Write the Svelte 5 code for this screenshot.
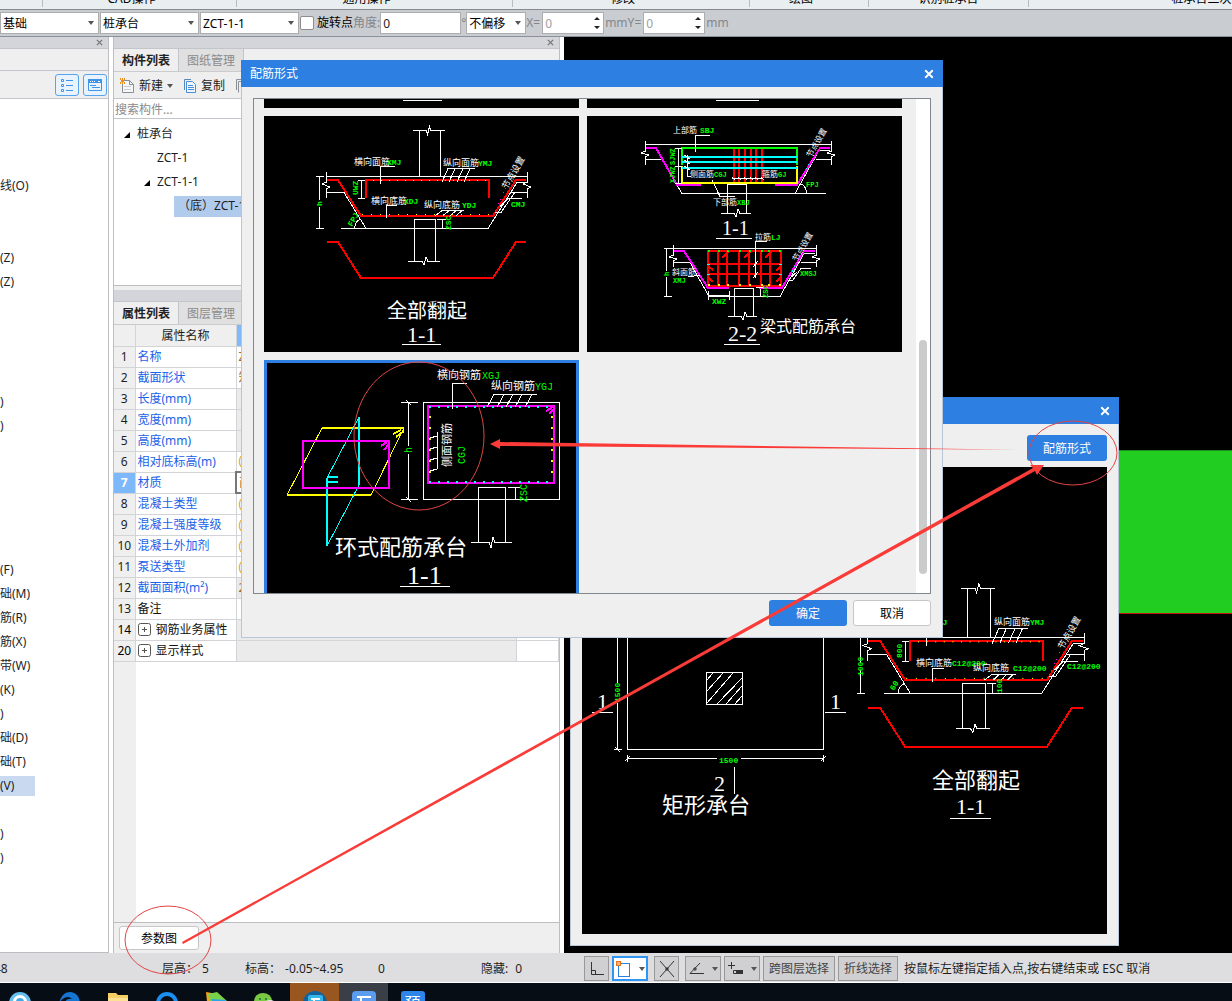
<script lang="ts">
  type Label = { x: number; y: number; t: string; c?: string; s?: number; r?: number };

  const ribbonGroups = ['', 'CAD操作', '通用操作', '修改', '绘图', '识别桩承台', '桩承台二次编辑'];

  const navRows: Record<number, string> = {
    3: '线(O)', 6: '(Z)', 7: '(Z)', 12: ')', 13: ')', 19: '(F)', 20: '础(M)', 21: '筋(R)',
    22: '筋(X)', 23: '带(W)', 24: '(K)', 25: ')', 26: '础(D)', 27: '础(T)', 28: '(V)', 30: ')', 31: ')'
  };
  const navList = Array.from({ length: 32 }, (_, i) => navRows[i] ?? '');

  const properties = [
    { no: 1, name: '名称', value: 'ZCT-1-1', kind: 'text' },
    { no: 2, name: '截面形状', value: '矩形', kind: 'text' },
    { no: 3, name: '长度(mm)', value: '', kind: 'locked' },
    { no: 4, name: '宽度(mm)', value: '', kind: 'locked' },
    { no: 5, name: '高度(mm)', value: '', kind: 'locked' },
    { no: 6, name: '相对底标高(m)', value: '(0)', kind: 'default' },
    { no: 7, name: '材质', value: '商品', kind: 'active' },
    { no: 8, name: '混凝土类型', value: '(商品)', kind: 'default' },
    { no: 9, name: '混凝土强度等级', value: '(C30)', kind: 'default' },
    { no: 10, name: '混凝土外加剂', value: '(无)', kind: 'default' },
    { no: 11, name: '泵送类型', value: '(混凝土)', kind: 'default' },
    { no: 12, name: '截面面积(m²)', value: '2.25', kind: 'locked' },
    { no: 13, name: '备注', value: '', kind: 'plain' },
    { no: 14, name: '钢筋业务属性', value: '', kind: 'group' },
    { no: 20, name: '显示样式', value: '', kind: 'group' }
  ];

  const foldLabels: Label[] = [
    { x: 354, y: 165, t: '横向面筋' },
    { x: 387, y: 165, t: 'XMJ', c: 'g' },
    { x: 443, y: 166, t: '纵向面筋' },
    { x: 478, y: 166, t: 'YMJ', c: 'g' },
    { x: 371, y: 204, t: '横向底筋' },
    { x: 404, y: 204, t: 'XDJ', c: 'g' },
    { x: 424, y: 208, t: '纵向底筋' },
    { x: 462, y: 208, t: 'YDJ', c: 'g' },
    { x: 511, y: 207, t: 'CMJ', c: 'g' },
    { x: 322, y: 206, t: 'h', c: 'g', r: -90 },
    { x: 358, y: 195, t: 'UWZ', c: 'g', r: -90 },
    { x: 352, y: 227, t: 'FPJ', c: 'g', r: -60 },
    { x: 451, y: 230, t: 'ZSC', c: 'g', r: -90 },
    { x: 507, y: 190, t: '节点设置', r: -60 },
    { x: 387, y: 318, t: '全部翻起', s: 20 },
    { x: 407, y: 342, t: '1-1', c: 'serif', s: 22 }
  ];

  const beamLabels: Label[] = [
    { x: 673, y: 133, t: '上部筋', s: 8 },
    { x: 700, y: 133, t: 'SBJ', c: 'g' },
    { x: 690, y: 177, t: '侧面筋', s: 8 },
    { x: 714, y: 177, t: 'CGJ', c: 'g', s: 7 },
    { x: 762, y: 177, t: '箍筋', s: 8 },
    { x: 778, y: 177, t: 'GJ', c: 'g', s: 7 },
    { x: 713, y: 205, t: '下部筋', s: 8 },
    { x: 737, y: 205, t: 'XBJ', c: 'g', s: 7 },
    { x: 806, y: 187, t: 'FPJ', c: 'g', s: 7 },
    { x: 675, y: 165, t: 'SJWZ', c: 'g', s: 7, r: -90 },
    { x: 675, y: 183, t: 'XJWZ', c: 'g', s: 7, r: -90 },
    { x: 811, y: 158, t: '节点设置', s: 8, r: -60 },
    { x: 722, y: 235, t: '1-1', c: 'serif', s: 20 },
    { x: 755, y: 240, t: '拉筋', s: 8 },
    { x: 771, y: 240, t: 'LJ', c: 'g' },
    { x: 672, y: 275, t: '斜面筋', s: 8 },
    { x: 673, y: 283, t: 'XMJ', c: 'g', s: 7 },
    { x: 800, y: 276, t: 'XMSJ', c: 'g', s: 7 },
    { x: 712, y: 304, t: 'XWZ', c: 'g' },
    { x: 669, y: 276, t: 'h', c: 'g', s: 7, r: -90 },
    { x: 768, y: 298, t: 'ZSC', c: 'g', s: 7, r: -90 },
    { x: 797, y: 262, t: '节点设置', s: 8, r: -60 },
    { x: 728, y: 341, t: '2-2', c: 'serif', s: 22 },
    { x: 760, y: 332, t: '梁式配筋承台', s: 16 }
  ];

  const ringLabels: Label[] = [
    { x: 437, y: 379, t: '横向钢筋', s: 11 },
    { x: 482, y: 379, t: 'XGJ', c: 'g', s: 10 },
    { x: 491, y: 390, t: '纵向钢筋', s: 11 },
    { x: 535, y: 390, t: 'YGJ', c: 'g', s: 10 },
    { x: 451, y: 467, t: '侧面钢筋', s: 11, r: -90 },
    { x: 465, y: 464, t: 'CGJ', c: 'g', s: 10, r: -90 },
    { x: 527, y: 502, t: 'ZSC', c: 'g', s: 10, r: -90 },
    { x: 412, y: 453, t: 'h', c: 'g', s: 10, r: -90 },
    { x: 335, y: 555, t: '环式配筋承台', s: 22 },
    { x: 407, y: 584, t: '1-1', c: 'serif', s: 26 }
  ];

  const sectionLabels: Label[] = [
    { x: 597, y: 709, t: '1', c: 'serif', s: 22 },
    { x: 830, y: 709, t: '1', c: 'serif', s: 22 },
    { x: 714, y: 791, t: '2', c: 'serif', s: 22 },
    { x: 662, y: 813, t: '矩形承台', s: 22 },
    { x: 719, y: 763, t: '1500', c: 'g' },
    { x: 620, y: 702, t: '1500', c: 'g', r: -90 },
    { x: 933, y: 625, t: 'XMJ', c: 'g' },
    { x: 994, y: 625, t: '纵向面筋' },
    { x: 1030, y: 625, t: 'YMJ', c: 'g' },
    { x: 916, y: 666, t: '横向底筋' },
    { x: 952, y: 666, t: 'C12@200', c: 'g' },
    { x: 973, y: 671, t: '纵向底筋' },
    { x: 1013, y: 671, t: 'C12@200', c: 'g' },
    { x: 1067, y: 669, t: 'C12@200', c: 'g' },
    { x: 863, y: 676, t: '1000', c: 'g', r: -90 },
    { x: 902, y: 658, t: '800', c: 'g', r: -90 },
    { x: 1002, y: 693, t: '100', c: 'g', r: -90 },
    { x: 894, y: 691, t: '60', c: 'g', r: -60 },
    { x: 1063, y: 650, t: '节点设置', r: -60 },
    { x: 932, y: 788, t: '全部翻起', s: 22 },
    { x: 956, y: 814, t: '1-1', c: 'serif', s: 22 }
  ];

  let selectedForm = $state('ring');
  let rotatePoint = $state(false);

  function range(from: number, to: number, step: number): number[] {
    const out: number[] = [];
    for (let v = from; v <= to; v += step) out.push(v);
    return out;
  }
</script>

{#snippet labels(items: Label[])}
  {#each items as l}
    <text
      x={l.x}
      y={l.y}
      class={l.c ?? 'w'}
      class:tiny={l.c === 'g' && (l.s ?? 8) < 10}
      font-size={l.s ?? (l.c === 'g' ? 8 : 9)}
      transform={l.r ? `rotate(${l.r} ${l.x} ${l.y})` : undefined}>{l.t}</text>
  {/each}
{/snippet}

{#snippet foldShape()}
  <!-- column above the cap -->
  <path class="ln" d="M413 130.5H426L427.5 134.5L429.5 126.5L431 130.5H445M419.5 130.5V176.5M440.5 130.5V176.5" />
  <!-- cap outline -->
  <path class="ln" d="M326.5 176.5H527.5M326.5 172V182L322 184L330 187L326.5 188.5V198M527.5 172V182L523 184L531 187L527.5 188.5V198" />
  <path class="ln" d="M326 192.5H344L366 228.5M341 228.5H488L517 182.5H527M511 192.5H527" />
  <path class="red" d="M327 180H338L361 216H493L516 180H526M366 198V180H489V198" />
  <path class="red" d="M327 242H338L361 278H493L516 242H526" />
  <path class="ln" d="M319.5 177V200M319.5 207V228M316 176.5H324M316 228.5H324M361.5 180V198M358 180.5H365M358 198.5H365" />
  <path class="ln" d="M395 166.5H380.5V184M475 168.5H448L442 182M455 168.5L449 182M463 168.5L457 182M470 168.5L464 182" />
  <path class="ln" d="M397 205.5H386.5V218M464 210.5H442L435 216M449 210.5L443 216M456 210.5L450 216M462 210.5L456 216" />
  <path class="ln" d="M354.5 228.5Q355 221 361 219M414.5 261V219.5H435.5V261M408 261.5H422L424 265L426 257L428 261.5H440" />
  <path class="ln" d="M437 219.5H446M442.5 220V228M495 212.5H501L515 192M500 206.5L508 198.5H522" />
  <path class="mag thin" stroke-dasharray="1 3" d="M495 211L506 188" />
  {#each range(373, 485, 8) as x}<rect class="yel" {x} y="180" width="1" height="1" />{/each}
  {#each range(362, 490, 9) as x}<rect class="yel" {x} y="214" width="1" height="1" />{/each}
{/snippet}

{#snippet foldDrawing()}
  <svg viewBox="264 116 315 236" role="img" aria-label="全部翻起">
    {@render foldShape()}
    <path class="ln" d="M402 344.5H441" />
    {@render labels(foldLabels)}
  </svg>
{/snippet}

{#snippet beamDrawing()}
  <svg viewBox="587 116 315 236" role="img" aria-label="梁式配筋承台">
    <path class="ln" d="M645 144.5H832M645.5 141V151L641 153L649 155L645.5 157V165M831.5 141V151L827 153L835 155L831.5 157V165" />
    <path class="ln" d="M645 159.5H662L682 193.5H826M795 193.5L819 150.5H830M816 159.5H831" />
    <path class="mag" d="M646 148H656L677 185H701M775 185H797L820 148H830" />
    {#each [734, 739, 745, 751, 756, 762] as x}<path class="red" d="M{x} 148V182" />{/each}
    <path class="grn" d="M682 165V148H797V165" />
    <path class="ylw" d="M682 166V183H797V166" />
    <path class="cyn" d="M682 157H797M682 162H797M682 168H797" />
    <path class="ln" d="M710 135.5H695.5V152M687.5 155V176.5H691M684 155L690 159M684 160L690 164M684 166L690 170" />
    <path class="ln" d="M732 178.5H763M732 177L735 180M738 177L741 180M744 177L747 180M750 177L753 180M755 177L758 180M761 177L764 180" />
    <path class="ln" d="M712 180L720 196.5H735M678.5 148V184M675 148.5H682M675 166.5H682M675 183.5H682M806.5 193Q806 186 801 184" />
    <path class="ln" d="M727.5 213V184.5H746.5V213M721 213.5H734L736 217L738 209L740 213.5H751M716 238.5H752" />
    <path class="cyn thin" stroke-dasharray="1 4" d="M801 178L816 152" />

    <path class="ln" d="M672 248.5H817M673.5 245V255L669 257L677 259L673.5 261V267M816.5 245V255L812 257L820 259L816.5 261V267" />
    <path class="ln" d="M673 262.5H690L709 296.5H780L804 253.5H815M801 262.5H816" />
    <path class="mag" d="M674 251H684L708 288H729M759 288H782L804 251H815" />
    <path class="red" d="M708 251H781V286H708ZM718 251V286M727 251V286M739 251V286M749 251V286M761 251V286M770 251V286M708 264H781M708 274H781" />
    <path class="red" d="M722 258L728 252M744 258L750 252M765 258L771 252M709 267L713 270M709 278L713 282M780 267L776 271M780 278L776 282" />
    {#each [708, 718, 727, 739, 749, 761, 768, 779] as x}
      <rect class="grn-f" {x} y="250" width="2" height="2" />
      <rect class="yel" {x} y="284" width="2" height="2" />
    {/each}
    {#each [264, 274] as y}
      <rect class="cyn-f" x="707" {y} width="3" height="1" />
      <rect class="cyn-f" x="779" {y} width="3" height="1" />
    {/each}
    <path class="ln" d="M767 241.5H755.5V278M753 267L758 261M753 278L758 272M666.5 248V271M666.5 277V296M664 248.5H672M664 296.5H672" />
    <path class="ln" d="M708 295.5H729M708.5 291V300M729.5 291V300M688 277L700 275M811 268.5H801L793 280H789M797 272L789 279" />
    <path class="ln" d="M760.5 289V297M756 287.5H764M734.5 316V288.5H753.5V316M728 316.5H741L743 320L745 312L747 316.5H757M724 344.5H760" />
    <path class="cyn thin" stroke-dasharray="1 4" d="M787 280L801 256" />
    {@render labels(beamLabels)}
  </svg>
{/snippet}

{#snippet ringDrawing()}
  <svg viewBox="264 360 315 236" role="img" aria-label="环式配筋承台">
    <rect class="ln" x="423.5" y="402.5" width="136" height="97" />
    <path class="ylw" d="M322 428H404M371 495H287M393 434L401 430M396 437L404 431" />
    <path class="ylw thin" d="M322 428L287 495M404 428L371 495" />
    <path class="cyn" d="M359 417V485M327 478V546M327 477H338M327 482H338" />
    <path class="cyn thin" d="M359 417L327 478M359 485L327 546" />
    <rect class="mag" x="303" y="441" width="86" height="47" />
    <path class="mag" d="M381 446L387 442M384 450L389 444" />
    <rect class="mag" x="428" y="406" width="126" height="77" />
    <path class="mag" d="M546 411L553 407M549 414L554 409" />
    {#each range(429, 551, 9) as x}
      <rect class="cyn-f" {x} y="406" width="2" height="2" />
      <rect class="cyn-f" {x} y="481" width="2" height="2" />
    {/each}
    {#each range(416, 472, 11) as y}
      <rect class="yel" x="429" {y} width="2" height="2" />
      <rect class="yel" x="551" {y} width="2" height="2" />
    {/each}
    <path class="ln" d="M408.5 402V446M408.5 454V499M401 402.5H418M401 499.5H418M406 400L411 405M406 497L411 502" />
    <path class="ln" d="M467 383.5H452.5V409M537 394.5H494L487 407M504 394.5L497 407M513 394.5L506 407M522 394.5L515 407M532 394.5L525 407" />
    <path class="ln" d="M437.5 432V469M430 438L437 436M430 449L437 447M430 460L437 458M430 471L437 469" />
    <path class="ln" d="M478.5 542V487.5H505.5V542M471 542.5H489L491 548L493 537L495 542.5H512M508 487.5H520M515.5 488V500M400 586.5H450" />
    {@render labels(ringLabels)}
  </svg>
{/snippet}

{#snippet closeIcon(size: number)}
  <svg class="x" width={size} height={size} viewBox="0 0 8 8"><path d="M1 1L7 7M7 1L1 7" /></svg>
{/snippet}

{#snippet arrow()}
  <svg class="arrow" width="6" height="4" viewBox="0 0 6 4"><path d="M0 0H6L3 4Z" /></svg>
{/snippet}

<div class="app">
  <div class="ribbon">
    {#each ribbonGroups as group}
      <div class="group"><span>{group}</span></div>
    {/each}
  </div>

  <div class="toolbar">
    <span class="combo"><select aria-label="构件大类"><option>基础</option></select>{@render arrow()}</span>
    <span class="combo"><select aria-label="构件类型"><option>桩承台</option></select>{@render arrow()}</span>
    <span class="combo"><select aria-label="构件"><option>ZCT-1-1</option></select>{@render arrow()}</span>
    <label class="check"><input type="checkbox" bind:checked={rotatePoint} />旋转点</label>
    <label class="dim angle">角度:<input type="text" value="0" /></label>
    <span class="dim degree">°</span>
    <span class="combo small"><select aria-label="偏移方式"><option>不偏移</option></select>{@render arrow()}</span>
    {#each ['X', 'Y'] as axis}
      <label class="dim">
        {axis}=
        <span class="spin">
          <input type="text" value="0" />
          <svg width="8" height="16" viewBox="0 0 8 16"><path d="M1 5H7L4 2ZM1 11H7L4 14Z" /></svg>
        </span>
        mm
      </label>
    {/each}
  </div>

  <main>
    <aside class="nav">
      <header class="dock">{@render closeIcon(7)}</header>
      <div class="nav-top"></div>
      <div class="nav-tools">
        <button type="button" aria-label="列表">
          <svg width="14" height="14" viewBox="0 0 14 14">
            <path d="M1.5 1.5h2v2h-2zM1.5 6.5h2v2h-2zM1.5 11.500h2v2h-2zM6 2.5h7M6 7.5h7M6 12.5h7" />
          </svg>
        </button>
        <button type="button" aria-label="面板">
          <svg width="16" height="14" viewBox="0 0 16 14">
            <path d="M1.5 1.5h13v11h-13z" /><path class="solid" d="M1.5 1.5h13v3h-13z" />
            <path class="dots" d="M3 3.5h1M5 3.5h1M7 3.5h1M11 3.5h2" /><path d="M3 7.5h6M5 9.5h8" />
          </svg>
        </button>
      </div>
      <ul>
        {#each navList as row, i}
          <li class:selected={i === 28}><span>{row}</span></li>
        {/each}
      </ul>
    </aside>

    <section class="panel">
      <header class="dock">{@render closeIcon(7)}</header>
      <nav class="tabs">
        <button type="button" class="on">构件列表</button>
        <button type="button">图纸管理</button>
      </nav>
      <div class="tools">
        <button type="button">
          <svg width="16" height="16" viewBox="0 0 16 16">
            <path d="M4.5 2.5H10.5L14.5 6.5V14.5H3.5V6" fill="#f6f6f6" stroke="#8a8f96" />
            <path d="M10.5 2.5V6.5H14.5" fill="none" stroke="#8a8f96" />
            <path d="M5 8.5H12M5 11.5H12" stroke="#c9ccd0" />
            <path d="M1 1H2M3 1H4M5 1H6M2 3H5M1 5H2M3 5H4M5 5H6" stroke="#f08c1e" stroke-width="2" />
          </svg>
          新建 {@render arrow()}
        </button>
        <button type="button">
          <svg width="14" height="16" viewBox="0 0 14 16">
            <path d="M1.5 12V1.5H8" fill="none" stroke="#5b87b8" />
            <path d="M3.5 3.5H9.5L12.5 6.5V14.5H3.5Z" fill="#eef5fd" stroke="#4a90d9" />
            <path d="M5 7.5H10M5 9.5H11M5 11.5H11" stroke="#4a90d9" />
          </svg>
          复制
        </button>
        <button type="button" aria-label="层间复制">
          <svg width="14" height="16" viewBox="0 0 14 16">
            <path d="M1.5 12V1.5H8M3.5 14.5V3.5H12" fill="none" stroke="#8a8f96" />
          </svg>
        </button>
      </div>
      <input class="search" type="text" placeholder="搜索构件..." aria-label="搜索构件" />
      <ul class="tree">
        <li><svg width="7" height="7" viewBox="0 0 7 7"><path d="M6 1V7H0Z" /></svg>桩承台</li>
        <li class="l2">ZCT-1</li>
        <li class="l1"><svg width="7" height="7" viewBox="0 0 7 7"><path d="M6 1V7H0Z" /></svg>ZCT-1-1</li>
        <li class="l3"><span>（底）ZCT-1-1-1</span></li>
      </ul>

      <header class="dock second"></header>
      <nav class="tabs">
        <button type="button" class="on">属性列表</button>
        <button type="button">图层管理</button>
      </nav>
      <div class="props">
        <table>
          <colgroup><col class="c-no" /><col class="c-name" /><col /><col class="c-add" /></colgroup>
          <thead>
            <tr><th></th><th>属性名称</th><th class="value-head">属性值</th><th></th></tr>
          </thead>
          <tbody>
            {#each properties as p (p.no)}
              <tr class={p.kind}>
                <th scope="row">{p.no}</th>
                <td class="name">
                  {#if p.kind === 'group'}
                    <svg class="plus" width="13" height="13" viewBox="0 0 13 13">
                      <rect x="0.5" y="0.5" width="12" height="12" rx="2" /><path d="M4 6.5H9M6.5 4V9" />
                    </svg>
                  {/if}
                  {p.name}
                </td>
                <td class="value">{p.value}</td>
                <td></td>
              </tr>
            {/each}
          </tbody>
        </table>
      </div>
      <footer><button type="button" class="plain">参数图</button></footer>
    </section>

    <div class="canvas"><div class="slab"></div></div>
  </main>

  <div class="status">
    <span class="s-first">48</span>
    <span class="s-floor">层高：<b>5</b></span>
    <span class="s-level">标高：<b>-0.05~4.95</b></span>
    <span class="s-zero">0</span>
    <span class="s-hidden">隐藏: <b>0</b></span>
    <div class="snap">
      <button type="button" aria-label="正交">
        <svg width="16" height="16" viewBox="0 0 16 16"><path d="M2.5 1V13.5H15M2.5 9.5H6.5V13" /></svg>
      </button>
      <button type="button" class="wide on" aria-label="对象捕捉">
        <svg width="18" height="18" viewBox="0 0 18 18">
          <rect x="3.5" y="3.5" width="11" height="13" stroke="#2d7fe1" />
          <rect x="1.5" y="1.5" width="4" height="4" fill="#f9b27a" stroke="#e8731c" />
        </svg>
        {@render arrow()}
      </button>
      <button type="button" class="cross" aria-label="交点">
        <svg width="18" height="18" viewBox="0 0 18 18"><path d="M2 1L16 17M16 1L2 17M8 8h2v2h-2z" /></svg>
      </button>
      <button type="button" class="wide" aria-label="角度">
        <svg width="18" height="16" viewBox="0 0 18 16"><path d="M12 2L2 12.5H16M6 7h2v2h-2z" /></svg>
        {@render arrow()}
      </button>
      <button type="button" class="wide" aria-label="输入">
        <svg width="18" height="16" viewBox="0 0 18 16"><path d="M1 4.5H8M4.5 1V8M6.5 9.5h9v3h-9z" /><path d="M9 11H16" stroke-width="4" /></svg>
        {@render arrow()}
      </button>
      <button type="button" class="word">跨图层选择</button>
      <button type="button" class="word">折线选择</button>
    </div>
    <span>按鼠标左键指定插入点,按右键结束或 ESC 取消</span>
  </div>

  <div class="taskbar">
    <button type="button" aria-label="浏览器">
      <svg width="24" height="24" viewBox="0 0 24 24"><circle cx="12" cy="12" r="11" fill="#63c0ee" /><circle cx="12" cy="11" r="7" fill="#fff" /><circle cx="12" cy="11" r="4" fill="#3fa9e5" /></svg>
    </button>
    <button type="button" aria-label="Edge">
      <svg width="24" height="24" viewBox="0 0 24 24"><path d="M2 12C4 5 8 1 13 1C19 1 23 6 23 13H8C8 9 11 7 15 8C12 4 6 6 2 12Z" fill="#1476d2" /></svg>
    </button>
    <button type="button" aria-label="资源管理器">
      <svg width="24" height="24" viewBox="0 0 24 24"><path d="M2 2H10L12 4H22V22H2Z" fill="#f5cf63" /><path d="M2 7H22V22H2Z" fill="#fbe191" /></svg>
    </button>
    <button type="button" aria-label="搜索">
      <svg width="24" height="24" viewBox="0 0 24 24"><circle cx="12" cy="12" r="9" fill="none" stroke="#1b8ff0" stroke-width="4" /></svg>
    </button>
    <button type="button" aria-label="视频">
      <svg width="24" height="24" viewBox="0 0 24 24"><path d="M2 1L13 3L20 9L4 20Z" fill="#f6a21c" /><path d="M4 3L13 1L23 10L8 22Z" fill="#7bd04b" /><path d="M7 8L22 9L14 18Z" fill="#2aa4e8" /></svg>
    </button>
    <button type="button" aria-label="微信">
      <svg width="24" height="24" viewBox="0 0 24 24"><ellipse cx="10" cy="10" rx="9" ry="8" fill="#7ac943" /><circle cx="7" cy="8" r="1" fill="#173" /><circle cx="13" cy="8" r="1" fill="#173" /><ellipse cx="17" cy="15" rx="7" ry="6" fill="#e8e8e8" /></svg>
    </button>
    <button type="button" class="orange" aria-label="建模">
      <svg width="24" height="24" viewBox="0 0 24 24"><circle cx="12" cy="12" r="12" fill="#13629c" /><rect x="5" y="4" width="15" height="14" rx="2" fill="#35b6ea" /><path d="M8 8H17M11 8V14" stroke="#fff" stroke-width="2" /></svg>
    </button>
    <button type="button" class="current" aria-label="土建">
      <svg width="24" height="24" viewBox="0 0 24 24"><rect width="24" height="24" rx="4" fill="#5a9ced" /><path d="M5 6H19M9 6V14M9 11H17" stroke="#fff" stroke-width="2" /></svg>
    </button>
    <button type="button" class="word-icon"><span>预</span></button>
  </div>

  <div class="window section-window">
    <header><span>参数图</span><button type="button" aria-label="关闭">{@render closeIcon(10)}</button></header>
    <div class="actions"><button type="button" class="primary">配筋形式</button></div>
    <svg class="drawing" viewBox="582 467 525 467" role="img" aria-label="矩形承台">
      <path class="ln" d="M627.5 500V749.5H823.5V500M617.5 500V683M617.5 703V749M614 749.5H622M615 747L620 752M614 637.5H622" />
      <path class="ln" d="M706.5 672.5H742.5V704.5H706.5ZM707 680L713 673M707 691L723 673M707 703L733 673M717 704L742 678M726 704L742 686M735 704L742 696" />
      <path class="ln" d="M592 712.5H613M825 712.5H846M627 758.5H717M741 758.5H824M627.5 755V762M823.5 755V762M625 761L630 756M821 761L826 756M734.5 767V794M950 818.5H991" />
      <g transform="translate(516.6 447.6) scale(1.076)">{@render foldShape()}</g>
      {@render labels(sectionLabels)}
    </svg>
  </div>

  <div class="window form-window">
    <header><span>配筋形式</span><button type="button" aria-label="关闭">{@render closeIcon(10)}</button></header>
    <div class="list">
      <div class="grid">
        <svg viewBox="264 99 315 9"><path class="ln" d="M403 100.5H442" /></svg>
        <svg viewBox="587 99 315 9"><path class="ln" d="M716 100.5H759" /></svg>
        <button type="button" class:chosen={selectedForm === 'fold'} onclick={() => (selectedForm = 'fold')}>{@render foldDrawing()}</button>
        <button type="button" class:chosen={selectedForm === 'beam'} onclick={() => (selectedForm = 'beam')}>{@render beamDrawing()}</button>
        <button type="button" class:chosen={selectedForm === 'ring'} onclick={() => (selectedForm = 'ring')}>{@render ringDrawing()}</button>
      </div>
      <div class="scroll"><div class="grip"></div></div>
    </div>
    <footer>
      <button type="button" class="primary">确定</button>
      <button type="button" class="plain">取消</button>
    </footer>
  </div>

  <svg class="marks">
    <ellipse cx="168" cy="940" rx="43" ry="34" />
    <ellipse cx="1073" cy="453" rx="44" ry="32" />
    <ellipse cx="419" cy="436" rx="65" ry="74" />
    <path d="M182 942L1033 468L1030 465L1044 465L1037 475L1035 471L183 944Z" />
    <path d="M1036 450L500 446V449L490 444L500 439V442Z" />
  </svg>
</div>

<style>
  :global(body) {
    background: #dedee0;
  }

  .app {
    position: relative;
    display: flex;
    flex-direction: column;
    min-height: 100vh;
    overflow: hidden;
    font-family: "Noto Sans", "Noto Sans CJK SC", sans-serif;
    font-size: 12px;
    line-height: 16px;
    color: #1e1e1e;
  }

  .app * {
    box-sizing: border-box;
  }

  button,
  input,
  select {
    margin: 0;
    padding: 0;
    border: none;
    border-radius: 0;
    background: none;
    font: inherit;
    color: inherit;
  }

  svg {
    display: block;
    flex: none;
  }

  ul {
    list-style: none;
    margin: 0;
    padding: 0;
  }

  .arrow {
    fill: #555;
  }

  .x {
    fill: none;
    stroke: currentColor;
    stroke-width: 1.5;
  }

  /* ribbon and option bar */
  .ribbon {
    display: grid;
    grid-template-columns: 43px 194px 276px 237px 119px 160px 370px;
    height: 9px;
    overflow: hidden;
    background: #e9eef0;
  }

  .group {
    display: flex;
    justify-content: center;
    align-items: flex-end;
    height: 7px;
    border-right: 1px solid #b9bdc1;
    padding-right: 16px;
    white-space: nowrap;
    color: #000;
  }

  .group:nth-child(n + 6) {
    padding-right: 0;
  }

  .toolbar {
    display: flex;
    align-items: center;
    height: 28px;
    border-top: 1px solid #85898e;
    border-bottom: 1px solid #8a919b;
    background: #c9ccd1;
    white-space: nowrap;
    color: #000;
  }

  .combo {
    position: relative;
    width: 99px;
    margin-right: 1px;
  }

  .combo select {
    appearance: none;
    width: 100%;
    height: 22px;
    padding: 1px 2px 0;
    border: 1px solid #adadad;
    background: #fff;
  }

  .combo .arrow {
    position: absolute;
    right: 5px;
    top: 9px;
  }

  .combo.small {
    width: 60px;
    margin-right: 0;
  }

  .check {
    display: flex;
    align-items: center;
    gap: 3px;
  }

  .check input {
    appearance: none;
    width: 14px;
    height: 14px;
    border: 1px solid #8c8c8c;
    border-radius: 2px;
    background: #fff;
  }

  .check input:checked {
    background: #2d7fe1;
  }

  .dim {
    display: flex;
    align-items: center;
    color: #84878b;
  }

  .dim input {
    width: 81px;
    height: 22px;
    padding: 0 2px;
    border: 1px solid #adadad;
    background: #fff;
  }

  .dim.angle input {
    color: #1e1e1e;
  }

  .degree {
    width: 5px;
  }

  .spin {
    display: flex;
    align-items: center;
    width: 62px;
    height: 22px;
    margin: 0 1px 0 2px;
    padding-right: 2px;
    border: 1px solid #adadad;
    background: #fff;
    fill: #222;
  }

  .spin input {
    flex: 1;
    min-width: 0;
    height: 20px;
    border: none;
    color: #a0a0a0;
  }

  /* docked panels */
  main {
    flex: 1;
    display: grid;
    grid-template-columns: 109px 447px 1fr;
    gap: 4px;
    background: #fff;
  }

  .dock {
    display: flex;
    justify-content: flex-end;
    align-items: center;
    height: 12px;
    padding-right: 5px;
    border-bottom: 1px solid #c2c5ca;
    background: #d3d5da;
    color: #777;
  }

  .nav {
    display: flex;
    flex-direction: column;
    border-right: 1px solid #bcbec2;
    border-bottom: 1px solid #bcbec2;
  }

  .nav-top {
    height: 22px;
    border-bottom: 1px solid #c2c5ca;
    background: #efefef;
  }

  .nav-tools {
    display: flex;
    justify-content: flex-end;
    align-items: center;
    gap: 4px;
    height: 28px;
    padding-right: 1px;
    border-bottom: 1px solid #c2c5ca;
    background: #efefef;
  }

  .nav-tools button {
    display: grid;
    place-items: center;
    width: 24px;
    height: 22px;
    border: 1px solid #58a3ee;
    border-radius: 3px;
    background: #e9f3fd;
  }

  .nav-tools path {
    fill: none;
    stroke: #3f94ea;
  }

  .nav-tools .solid {
    fill: #3f94ea;
  }

  .nav-tools .dots {
    stroke: #fff;
  }

  .nav ul {
    padding-top: 3px;
  }

  .nav li {
    display: flex;
    align-items: center;
    height: 24px;
  }

  .nav li.selected span {
    width: 35px;
    padding: 2px 0;
    background: #c9daf0;
  }

  .panel {
    display: flex;
    flex-direction: column;
    min-width: 0;
    border: solid #bcbec2;
    border-width: 0 1px;
    background: #efefef;
  }

  .tabs {
    display: flex;
    height: 23px;
    border-bottom: 1px solid #c9cbcf;
  }

  .tabs button {
    width: 65px;
    padding-top: 2px;
    border-right: 1px solid #c2c5ca;
    background: #e0e0e0;
    color: #8b8b8b;
  }

  .tabs .on {
    background: #efefef;
    color: #222;
    font-weight: bold;
  }

  .tools {
    display: flex;
    align-items: center;
    gap: 10px;
    height: 27px;
    padding-top: 2px;
    padding-left: 5px;
    border-bottom: 1px solid #c2c5ca;
  }

  .tools button {
    display: flex;
    align-items: center;
    gap: 4px;
  }

  .search {
    height: 20px;
    padding: 1px 1px 0;
    border-bottom: 1px solid #c2c5ca;
    background: #fff;
  }

  .search::placeholder {
    color: #8a8a8a;
    opacity: 1;
  }

  .tree {
    height: 167px;
    padding-top: 3px;
    border-bottom: 1px solid #bcbec2;
    background: #fff;
  }

  .tree li {
    display: flex;
    align-items: center;
    gap: 6px;
    height: 24px;
    padding-left: 10px;
  }

  .tree .l1 {
    padding-left: 30px;
  }

  .tree .l2 {
    padding-left: 43px;
  }

  .tree .l3 {
    padding-left: 60px;
  }

  .tree .l3 span {
    padding: 2px 4px 3px;
    background: #b1cbed;
  }

  .second {
    margin-top: 4px;
  }

  .props {
    flex: 1;
    border-bottom: 1px solid #bcbec2;
    background: linear-gradient(to right, #efefef 22px, #fff 22px);
  }

  table {
    width: 100%;
    border-collapse: collapse;
    table-layout: fixed;
    background: #fff;
  }

  .c-no {
    width: 21px;
  }

  .c-name {
    width: 101px;
  }

  .c-add {
    width: 42px;
  }

  th,
  td {
    height: 21px;
    padding: 0 2px;
    border-right: 1px solid #d2d4d7;
    border-bottom: 1px solid #d2d4d7;
    text-align: left;
    font-weight: normal;
    white-space: nowrap;
    overflow: hidden;
  }

  th {
    padding: 0;
    background: #efefef;
    text-align: center;
  }

  thead th {
    padding-top: 2px;
  }

  .value-head {
    background: #80b8fa;
  }

  .name {
    color: #1a62e8;
  }

  tr.plain .name,
  tr.group .name {
    color: #111;
  }

  tr.group {
    display: table-row;
    height: auto;
  }

  .value {
    color: #9a6420;
  }

  .default .value {
    color: #d8a900;
  }

  .locked .value,
  tr.group .value {
    background: #ebebeb;
  }

  .active th {
    background: #7db8fb;
    color: #fff;
    font-weight: bold;
  }

  .active .value {
    border: 2px solid #777;
  }

  .plus {
    display: inline-block;
    vertical-align: -2px;
    margin-right: 2px;
    fill: #fff;
    stroke: #555;
  }

  .panel footer {
    height: 30px;
    padding: 3px 5px;
  }

  .plain:is(button) {
    padding-top: 1px;
    border: 1px solid #c6c6c6;
    border-radius: 3px;
    background: #fff;
    color: #000;
  }

  .panel footer button {
    width: 80px;
    height: 24px;
  }

  .canvas {
    position: relative;
    background: #000;
  }

  .slab {
    position: absolute;
    top: 413px;
    left: 440px;
    right: 0;
    height: 164px;
    border-top: 1px solid #1b8f1b;
    border-bottom: 1px solid #d01010;
    background: #22cd22;
  }

  /* status bar */
  .status {
    display: flex;
    align-items: center;
    height: 30px;
    padding-top: 2px;
    border-bottom: 1px solid #fff;
    background: #dedee0;
    white-space: nowrap;
  }

  .status b {
    font-weight: normal;
    margin-left: 4px;
  }

  .s-first {
    width: 168px;
    margin-left: -6px;
  }

  .s-floor {
    width: 83px;
  }

  .s-level {
    width: 133px;
  }

  .s-zero {
    width: 103px;
  }

  .s-hidden {
    width: 103px;
  }

  .snap {
    display: flex;
    gap: 3px;
    margin-right: 6px;
  }

  .snap button {
    display: flex;
    align-items: center;
    justify-content: center;
    width: 25px;
    height: 25px;
    border: 1px solid #989898;
    background: #d0d0d2;
  }

  .snap .cross {
    margin: 0 3px;
  }

  .snap svg:not(.arrow) {
    fill: none;
    stroke: #333;
  }

  .snap .wide {
    width: 36px;
    gap: 6px;
  }

  .snap .on {
    border: 2px solid #3096f5;
    background: #fff;
  }

  .snap .word {
    width: auto;
    padding: 0 5px;
    color: #444;
  }

  .taskbar {
    display: flex;
    height: 18px;
    padding-right: 8px;
    overflow: hidden;
    background: #070d15;
  }

  .taskbar button {
    display: flex;
    align-items: flex-start;
    justify-content: center;
    width: 49px;
    height: 40px;
    padding-top: 8px;
    padding-right: 9px;
    flex: none;
  }

  .taskbar .orange {
    margin-left: -4px;
    padding-right: 0;
    background: #9a561f;
  }

  .taskbar .current {
    padding-right: 0;
    background: #3a3e46;
  }

  .taskbar .word-icon {
    padding-right: 0;
  }

  .word-icon span {
    width: 24px;
    height: 24px;
    border-radius: 3px;
    background: #2f86ea;
    color: #fff;
    font-size: 16px;
    line-height: 24px;
  }

  /* floating windows */
  .window {
    position: absolute;
    display: flex;
    flex-direction: column;
    border: solid #b9c6d8;
    border-width: 0 1px 1px;
    background: #efefef;
  }

  .window header {
    display: flex;
    align-items: center;
    justify-content: space-between;
    height: 27px;
    margin: 0 -1px;
    padding: 0 9px;
    background: #2d7fe1;
    color: #fff;
  }

  .primary {
    padding-top: 1px;
    border-radius: 3px;
    background: #2d7fe1;
    color: #fff;
  }

  .section-window {
    top: 397px;
    left: 570px;
    width: 549px;
    padding-bottom: 11px;
  }

  .actions {
    display: flex;
    justify-content: flex-end;
    padding: 11px 11px 6px;
  }

  .actions button {
    width: 80px;
    height: 26px;
  }

  .drawing {
    margin: 0 11px;
    background: #000;
  }

  .form-window {
    top: 60px;
    left: 241px;
    width: 702px;
  }

  .list {
    display: flex;
    height: 496px;
    margin: 11px 11px 0;
    border: 1px solid #82868f;
    overflow: hidden;
  }

  .grid {
    flex: 1;
    display: grid;
    grid-template-columns: 315px 315px;
    grid-template-rows: 9px 236px 236px;
    align-content: start;
    gap: 8px;
    padding-left: 10px;
  }

  .grid svg {
    width: 100%;
    background: #000;
  }

  .grid button {
    position: relative;
  }

  .grid .chosen::after {
    content: "";
    position: absolute;
    inset: 0;
    border: 3px solid #2d7fe1;
  }

  .scroll {
    width: 14px;
    padding: 241px 3px 0;
    background: #fff;
  }

  .grip {
    height: 234px;
    border-radius: 4px;
    background: #cbcbcb;
  }

  .form-window footer {
    display: flex;
    justify-content: flex-end;
    gap: 6px;
    padding: 6px 11px 11px;
  }

  .form-window footer button {
    width: 78px;
    height: 26px;
  }

  /* section drawings */
  .ln,
  .red,
  .mag,
  .cyn,
  .grn,
  .ylw {
    fill: none;
    stroke: #fff;
    stroke-width: 1px;
    vector-effect: non-scaling-stroke;
    shape-rendering: crispEdges;
  }

  .red {
    stroke: #f00;
    stroke-width: 2px;
  }

  .mag {
    stroke: #f0f;
    stroke-width: 2px;
  }

  .cyn {
    stroke: #0ff;
    stroke-width: 2px;
  }

  .grn {
    stroke: #0f0;
    stroke-width: 2px;
  }

  .ylw {
    stroke: #ff0;
    stroke-width: 2px;
  }

  .thin {
    stroke-width: 1px;
  }

  .yel {
    fill: #ff0;
  }

  .cyn-f {
    fill: #0ff;
  }

  .grn-f {
    fill: #0f0;
  }

  .w {
    fill: #fff;
    font-family: "Noto Sans CJK SC", sans-serif;
  }

  .g {
    fill: #0f0;
    font-family: "Liberation Mono", monospace;
  }

  .tiny {
    font-weight: bold;
  }

  .serif {
    fill: #fff;
    font-family: "Liberation Serif", serif;
  }

  .marks {
    position: absolute;
    inset: 0;
    width: 100%;
    height: 100%;
    pointer-events: none;
    fill: #fb3b38;
  }

  .marks ellipse {
    fill: none;
    stroke: #e04545;
  }
</style>
